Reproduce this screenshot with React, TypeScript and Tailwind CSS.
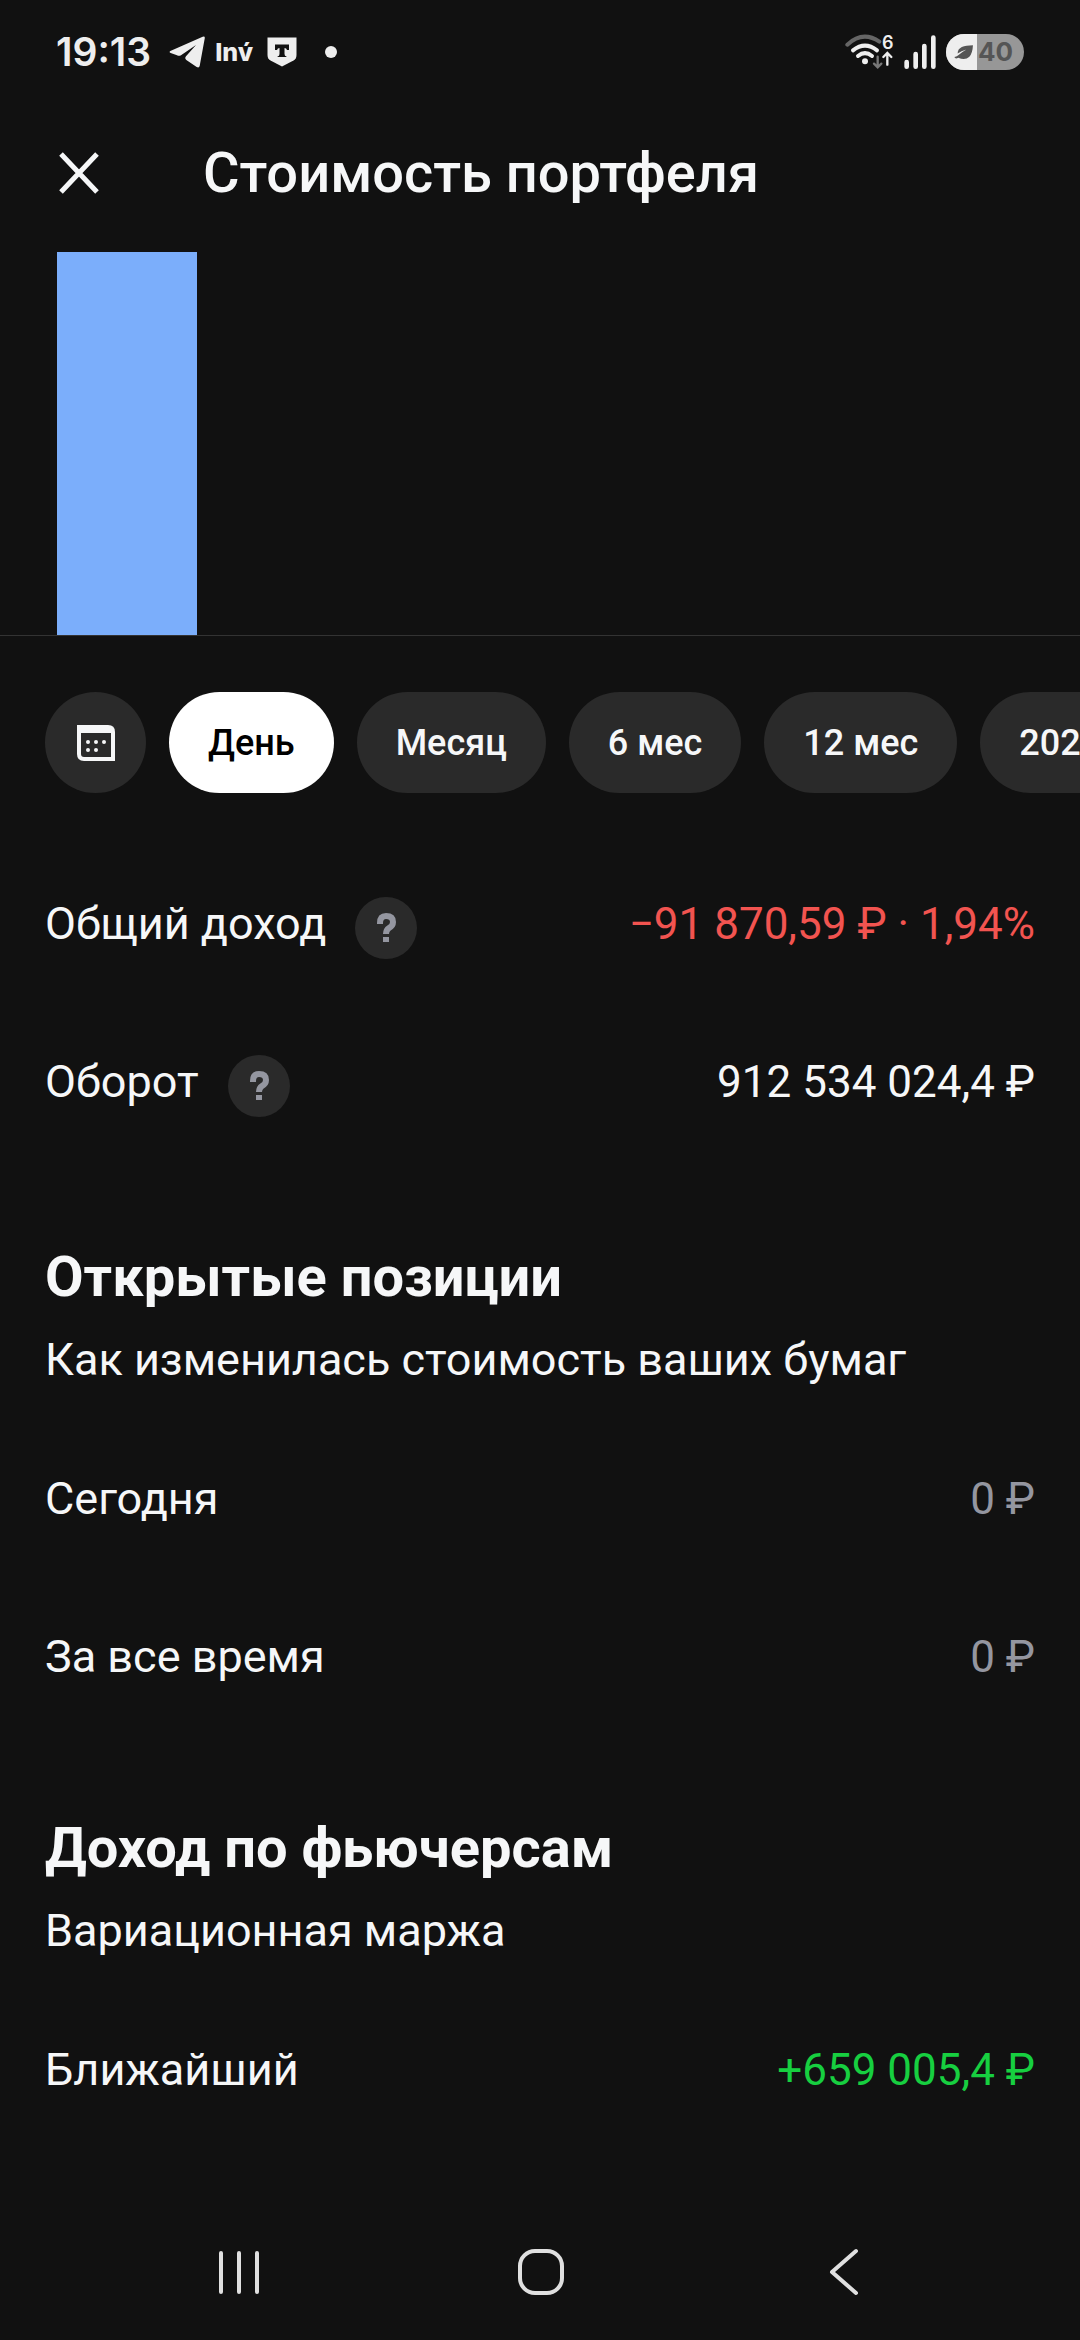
import type { ReactNode } from "react";

const periods = ["День", "Месяц", "6 мес", "12 мес", "2025"];

const StatusBar = () => {
  return (
    <div className="flex h-[104px] items-center justify-between px-[56px] text-[#eeeeee]">
      <div className="flex items-center">
        <span className="font-['Inter',sans-serif] text-[39px] leading-[48px] font-semibold">19:13</span>

        <svg className="ml-[18px] h-[32px] w-[36px]" viewBox="385 53 108 96" fill="currentColor">
          <path d="M389 98 L486 55 Q494 52 492 61 L477 143 Q475 150 468 146 L437 125 Q431 120 436 114 L466 80 L421 111 Q415 114 409 111 L390 104 Q384 101 389 98 Z" />
        </svg>

        <span className="ml-[10px] font-['Inter',sans-serif] text-[25px] leading-[48px] font-extrabold">Inv́</span>

        <svg className="ml-[14px] h-[30px] w-[30px]" viewBox="0 0 30 30">
          <path d="M0.500 0.500 H29.500 V18 Q29.500 21.500 26.500 23.500 L15 29.500 L3.500 23.500 Q0.500 21.500 0.500 18 Z" fill="currentColor" />
          <path d="M8 7.500 H22 V13 H20 Q19.500 11 17.500 11 V17 Q17.500 19 19.500 19.500 V20 H10.500 V19.500 Q12.500 19 12.500 17 V11 Q10.500 11 10 13 H8 Z" fill="#111111" />
        </svg>

        <span className="ml-[28px] h-[12px] w-[12px] rounded-full bg-[#eeeeee]" />
      </div>

      <div className="flex items-center gap-[10px]">
        <svg className="h-[38px] w-[50px]" viewBox="70 38 150 114" fill="none" strokeLinecap="round">
          <path d="M80 73 Q126 30 176 64" stroke="#666666" strokeWidth="12" />
          <path d="M97 90 Q133 62 169 90" stroke="#eeeeee" strokeWidth="12" />
          <path d="M112 107 Q133 90 154 107" stroke="#eeeeee" strokeWidth="12" />
          <circle cx="133" cy="123" r="9" fill="#eeeeee" />
          <path d="M171 109 V140 M160 130 L171 141 L182 130" stroke="#777777" strokeWidth="7" />
          <path d="M200 133 V100 M188 110 L200 98 L212 110" stroke="#eeeeee" strokeWidth="7" />
          <text x="184" y="85" fill="#eeeeee" className="font-['Inter',sans-serif] text-[54px] font-semibold">6</text>
        </svg>

        <svg className="h-[36px] w-[32px]" viewBox="250 40 96 108" fill="none" stroke="#eeeeee" strokeWidth="14" strokeLinecap="round">
          <path d="M258 124 V138 M285 100 V138 M311 76 V138 M338 51 V138" />
        </svg>

        <div className="flex h-[36px] w-[78px] items-center overflow-hidden rounded-full bg-[#979797] text-[#555555]">
          <div className="flex h-full w-[31px] items-center justify-end bg-[#eeeeee] pr-[4px]">
            <svg className="h-[15px] w-[19px]" viewBox="400 70 58 46">
              <path d="M458 71 Q436 72 424 76 Q411 82 411 96 Q422 88 438 84 Q424 92 412 102 Q407 106 401 107 Q404 114 413 109 Q434 118 447 106 Q457 95 458 71 Z" fill="currentColor" />
            </svg>
          </div>
          <span className="ml-px font-['Inter',sans-serif] text-[26px] leading-[36px] font-bold">40</span>
        </div>
      </div>
    </div>
  );
};

const Header = () => {
  return (
    <header className="flex h-[138px] items-center px-[56px]">
      <button type="button" aria-label="Закрыть" className="h-[46px] w-[46px]">
        <svg viewBox="0 0 46 46" fill="none" stroke="currentColor" strokeWidth="5">
          <path d="M5 4 L41 42 M41 4 L5 42" />
        </svg>
      </button>
      <h1 className="ml-[101px] text-[56px] leading-[72px] font-medium">Стоимость портфеля</h1>
    </header>
  );
};

const Chart = () => {
  return (
    <div className="flex h-[394px] items-end border-b border-[#333333] px-[57px]">
      <div className="h-[383px] w-[140px] bg-[#7baefb]" />
    </div>
  );
};

const Periods = () => {
  return (
    <div className="mt-[56px] flex gap-[23px] overflow-hidden pl-[45px]">
      <button
        type="button"
        aria-label="Выбрать даты"
        className="flex h-[101px] w-[101px] shrink-0 items-center justify-center rounded-full bg-[#2a2a2a]"
      >
        <svg className="h-[36px] w-[38px]" viewBox="0 0 38 36">
          <path
            d="M0 0 H31 Q38 0 38 7 V36 H7 Q0 36 0 29 Z M4 8 V29 Q4 32 7 32 H34 V8 Z"
            fill="currentColor"
            fillRule="evenodd"
          />
          <g fill="currentColor">
            <circle cx="11" cy="17" r="2" />
            <circle cx="19" cy="17" r="2" />
            <circle cx="27" cy="17" r="2" />
            <circle cx="11" cy="25" r="2" />
            <circle cx="19" cy="25" r="2" />
          </g>
        </svg>
      </button>

      {periods.map((period, index) => (
        <button
          key={period}
          type="button"
          className={
            index === 0
              ? "h-[101px] shrink-0 rounded-full bg-white px-[39px] text-[36px] font-medium text-black"
              : "h-[101px] shrink-0 rounded-full bg-[#2a2a2a] px-[39px] text-[36px] font-medium"
          }
        >
          {period}
        </button>
      ))}
    </div>
  );
};

type RowProps = {
  label: string;
  help?: boolean;
  valueClass?: string;
  children: ReactNode;
};

const Row = ({ label, help, valueClass = "", children }: RowProps) => {
  return (
    <div className="flex h-[158px] items-center justify-between leading-[60px]">
      <div className="flex items-center text-[45px]">
        <span>{label}</span>
        {help && (
          <button
            type="button"
            aria-label={`${label}: подробнее`}
            className="mt-[8px] ml-[29px] h-[62px] w-[62px] rounded-full bg-[#2a2a2a] text-[#9496a0]"
          >
            <svg viewBox="0 0 62 62" fill="none" stroke="currentColor" strokeWidth="6">
              <path d="M25 27 V26 Q25 19 31 19 Q38 19 38 25 Q38 29 34 31 Q31 33 31 37" />
              <path d="M31 40 V45" />
            </svg>
          </button>
        )}
      </div>
      <span className={`text-[44px] ${valueClass}`}>{children}</span>
    </div>
  );
};

type SectionProps = {
  title: string;
  subtitle: string;
  children: ReactNode;
};

const Section = ({ title, subtitle, children }: SectionProps) => {
  return (
    <section className="pt-[76px]">
      <h2 className="text-[56px] leading-[72px] font-bold">{title}</h2>
      <p className="mt-[17px] mb-[30px] text-[45px] leading-[60px]">{subtitle}</p>
      {children}
    </section>
  );
};

const NavBar = () => {
  return (
    <nav className="mt-auto flex h-[136px] items-center justify-between px-[209px] text-[#e0e0e0]">
      <button type="button" aria-label="Недавние" className="h-[60px] w-[60px]">
        <svg viewBox="0 0 60 60" fill="none" stroke="currentColor" strokeWidth="4" strokeLinecap="round">
          <path d="M12 11 V50 M30 11 V50 M48 11 V50" />
        </svg>
      </button>
      <button type="button" aria-label="Домой" className="h-[60px] w-[60px]">
        <svg viewBox="0 0 60 60" fill="none" stroke="currentColor" strokeWidth="4">
          <rect x="10" y="9" width="42" height="42" rx="15" />
        </svg>
      </button>
      <button type="button" aria-label="Назад" className="h-[60px] w-[60px]">
        <svg viewBox="0 0 60 60" fill="none" stroke="currentColor" strokeWidth="4" strokeLinecap="round" strokeLinejoin="round">
          <path d="M45 9 L21 30 L45 51" />
        </svg>
      </button>
    </nav>
  );
};

const App = () => {
  return (
    <div className="flex min-h-screen flex-col bg-[#111111] font-['Roboto',sans-serif] text-[#f6f7f8]">
      <StatusBar />
      <Header />
      <Chart />
      <Periods />

      <main className="mt-[52px] px-[45px]">
        <div className="mb-[4px]">
          <Row label="Общий доход" help valueClass="text-[#f25450]">
            −91 870,59 ₽ · 1,94%
          </Row>
          <Row label="Оборот" help>
            912 534 024,4 ₽
          </Row>
        </div>

        <Section title="Открытые позиции" subtitle="Как изменилась стоимость ваших бумаг">
          <Row label="Сегодня" valueClass="text-[#9496a0]">
            0 ₽
          </Row>
          <Row label="За все время" valueClass="text-[#9496a0]">
            0 ₽
          </Row>
        </Section>

        <Section title="Доход по фьючерсам" subtitle="Вариационная маржа">
          <Row label="Ближайший" valueClass="text-[#17cf40]">
            +659 005,4 ₽
          </Row>
        </Section>
      </main>

      <NavBar />
    </div>
  );
};

export default App;
